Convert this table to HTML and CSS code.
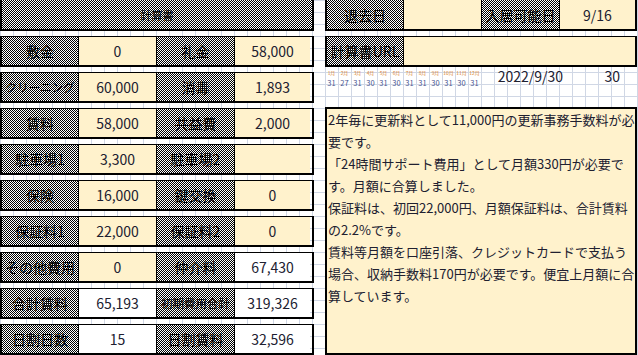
FILE: index.html
```html
<!DOCTYPE html>
<html lang="ja">
<head>
<meta charset="utf-8">
<title>計算書</title>
<link rel="stylesheet" href="styles.css">
</head>
<body>
<div class="sheet">
  <div class="left">
    <div class="block title"><div class="lab head">計算書</div></div>
    <div class="block row"><div class="lab">敷金</div><div class="val">0</div><div class="lab">礼金</div><div class="val">58,000</div></div>
    <div class="block row"><div class="lab small">クリーニング</div><div class="val">60,000</div><div class="lab">消毒</div><div class="val">1,893</div></div>
    <div class="block row"><div class="lab">賃料</div><div class="val">58,000</div><div class="lab">共益費</div><div class="val">2,000</div></div>
    <div class="block row"><div class="lab">駐車場1</div><div class="val">3,300</div><div class="lab">駐車場2</div><div class="val"></div></div>
    <div class="block row"><div class="lab">保険</div><div class="val">16,000</div><div class="lab">鍵交換</div><div class="val">0</div></div>
    <div class="block row"><div class="lab">保証料1</div><div class="val">22,000</div><div class="lab">保証料2</div><div class="val">0</div></div>
    <div class="block row"><div class="lab">その他費用</div><div class="val">0</div><div class="lab">仲介料</div><div class="val white">67,430</div></div>
    <div class="block row"><div class="lab">合計賃料</div><div class="val white">65,193</div><div class="lab small">初期費用合計</div><div class="val white">319,326</div></div>
    <div class="block row"><div class="lab">日割日数</div><div class="val white">15</div><div class="lab">日割賃料</div><div class="val white">32,596</div></div>
  </div>
  <div class="right">
    <div class="rgroup">
      <div class="block title row"><div class="lab">退去日</div><div class="val"></div><div class="lab">入居可能日</div><div class="val">9/16</div></div>
      <div class="block url"><div class="lab">計算書URL</div><div class="val"></div></div>
    </div>
    <div class="cal">
      <div class="months">
        <div class="m"><span class="mn">1月</span><span class="md">31</span></div>
        <div class="m"><span class="mn">2月</span><span class="md">27</span></div>
        <div class="m"><span class="mn">3月</span><span class="md">31</span></div>
        <div class="m"><span class="mn">4月</span><span class="md">30</span></div>
        <div class="m"><span class="mn">5月</span><span class="md">31</span></div>
        <div class="m"><span class="mn">6月</span><span class="md">30</span></div>
        <div class="m"><span class="mn">7月</span><span class="md">31</span></div>
        <div class="m"><span class="mn">8月</span><span class="md">31</span></div>
        <div class="m"><span class="mn">9月</span><span class="md">30</span></div>
        <div class="m"><span class="mn">10月</span><span class="md">31</span></div>
        <div class="m"><span class="mn">11月</span><span class="md">30</span></div>
        <div class="m"><span class="mn">12月</span><span class="md">31</span></div>
      </div>
      <div class="date">2022/9/30</div>
      <div class="days">30</div>
    </div>
    <div class="note">2年毎に更新料として11,000円の更新事務手数料が必<br>要です。<br>「24時間サポート費用」として月額330円が必要で<br>す。月額に合算しました。<br>保証料は、初回22,000円、月額保証料は、合計賃料<br>の2.2%です。<br>賃料等月額を口座引落、クレジットカードで支払う<br>場合、収納手数料170円が必要です。便宜上月額に合<br>算しています。</div>
  </div>
</div>
</body>
</html>
```

FILE: styles.css
```css
html, body {
  margin: 0;
  padding: 0;
}
body {
  width: 638px;
  height: 355px;
  overflow: hidden;
  background-color: #fff;
  background-image:
    linear-gradient(to right, #d0d7e5 1px, transparent 1px),
    linear-gradient(to bottom, #d0d7e5 1px, transparent 1px);
  background-size: 13px 12px;
  font-family: "Noto Sans CJK JP", sans-serif;
  color: #202030;
}
.sheet {
  display: flex;
  gap: 11px;
}
.left {
  width: 314px;
  display: flex;
  flex-direction: column;
  gap: 5px;
}
.right {
  width: 312px;
  display: flex;
  flex-direction: column;
}
.rgroup {
  display: flex;
  flex-direction: column;
  gap: 5px;
}
.block {
  box-sizing: border-box;
  height: 31px;
  border-left: 2px solid #000;
  border-right: 2px solid #000;
  border-top: 1px solid #000;
  border-bottom: 2px solid #000;
  display: grid;
  grid-template-columns: 76px 78px 78px 76px;
}
.block.title {
  border-top: 0;
}
.left .title {
  grid-template-columns: 1fr;
}
.block.url {
  grid-template-columns: 76px 1fr;
}
.block > div + div {
  border-left: 1px solid #000;
}
.lab, .val {
  display: flex;
  align-items: center;
  justify-content: center;
  font-size: 14px;
  white-space: nowrap;
  overflow: hidden;
}
.lab {
  background: repeating-conic-gradient(#000 0% 25%, #fff 0% 50%) 0 0 / 2px 2px;
  color: #000;
}
.lab.head {
  font-size: 11px;
}
.lab.small {
  font-size: 11.5px;
}
.val {
  background: #fff2cc;
}
.val.white {
  background: #fff;
}
.cal {
  height: 40px;
  display: flex;
  align-items: flex-start;
}
.months {
  display: grid;
  grid-template-columns: repeat(12, 13px);
  margin-top: 3px;
}
.m {
  display: flex;
  flex-direction: column;
  align-items: center;
}
.mn {
  display: block;
  height: 7px;
  font-size: 7px;
  line-height: 7px;
  color: #d9822b;
  white-space: nowrap;
  transform: scale(0.7);
  transform-origin: center center;
}
.md {
  font-size: 7.5px;
  line-height: 11px;
  color: #4a5590;
}
.date {
  width: 91px;
  box-sizing: border-box;
  padding-right: 9px;
  text-align: right;
  font-size: 14px;
  line-height: 16px;
  margin-top: 1px;
}
.days {
  flex: 1;
  box-sizing: border-box;
  padding-right: 17px;
  text-align: right;
  font-size: 14px;
  line-height: 16px;
  margin-top: 1px;
}
.note {
  box-sizing: border-box;
  height: 248px;
  background: #fff2cc;
  border: 2px solid #000;
  padding: 0 0 0 1px;
  font-size: 13px;
  line-height: 22px;
  white-space: nowrap;
  overflow: hidden;
}
```
